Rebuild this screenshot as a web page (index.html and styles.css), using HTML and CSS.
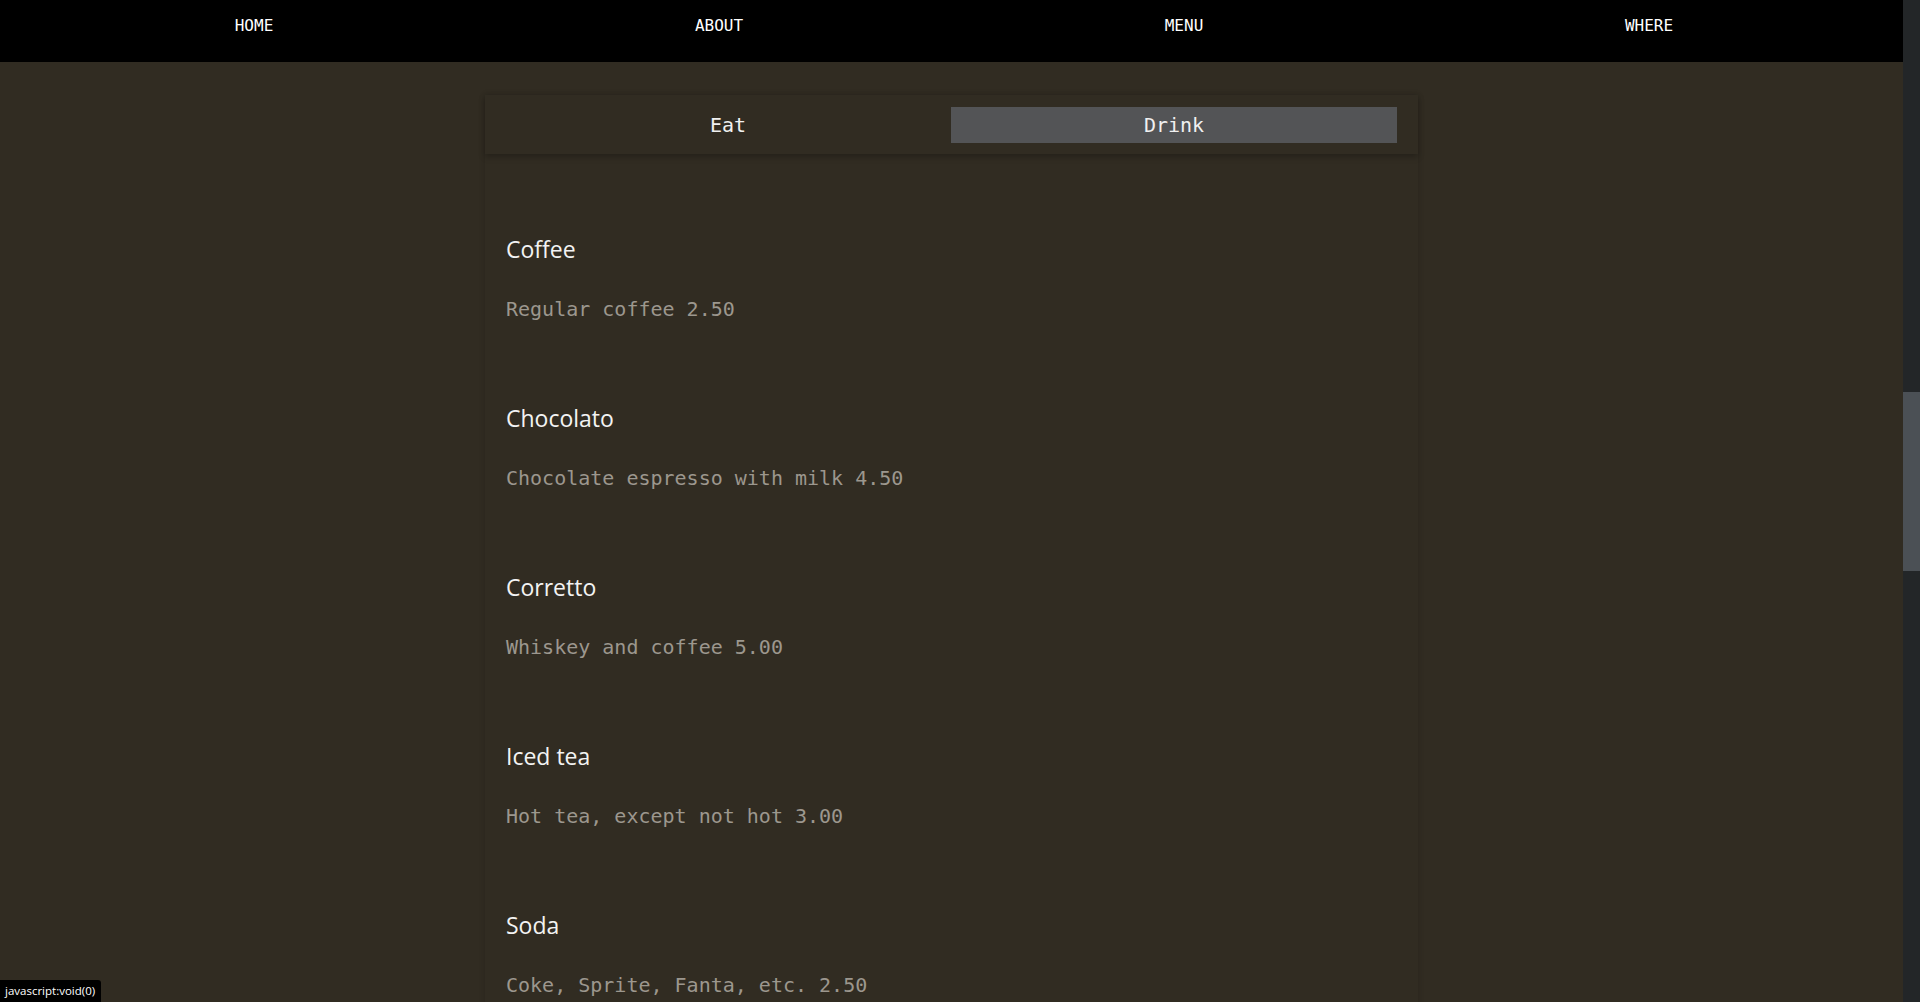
FILE: index.html
```html
<!DOCTYPE html>
<html lang="en">
<head>
<meta charset="utf-8">
<title>Menu</title>
<link rel="stylesheet" href="styles.css">
</head>
<body>
<div class="page">
  <nav class="topnav">
    <a href="#">HOME</a>
    <a href="#">ABOUT</a>
    <a href="#">MENU</a>
    <a href="#">WHERE</a>
  </nav>
  <main class="card">
    <div class="tabs">
      <a class="tab" href="#">Eat</a>
      <a class="tab active" href="#">Drink</a>
    </div>
    <div class="items">
      <section class="item">
        <h3>Coffee</h3>
        <p>Regular coffee 2.50</p>
      </section>
      <section class="item">
        <h3>Chocolato</h3>
        <p>Chocolate espresso with milk 4.50</p>
      </section>
      <section class="item">
        <h3>Corretto</h3>
        <p>Whiskey and coffee 5.00</p>
      </section>
      <section class="item">
        <h3>Iced tea</h3>
        <p>Hot tea, except not hot 3.00</p>
      </section>
      <section class="item">
        <h3>Soda</h3>
        <p>Coke, Sprite, Fanta, etc. 2.50</p>
      </section>
    </div>
  </main>
</div>
<div class="scrollbar"><div class="thumb"></div></div>
<div class="status">javascript:void(0)</div>
</body>
</html>
```
FILE: styles.css
```css
html, body {
  margin: 0;
  height: 100%;
  overflow: hidden;
}
body {
  background: #312c22;
  display: flex;
  font-family: "DejaVu Sans Mono", monospace;
}
.page {
  flex: 1;
  min-width: 0;
  overflow: hidden;
}
.topnav {
  height: 62px;
  background: #000;
  display: grid;
  grid-template-columns: repeat(4, 1fr);
  padding: 0 21.5px;
}
.topnav a {
  color: #fff;
  text-decoration: none;
  text-align: center;
  font-family: "DejaVu Sans Mono", monospace;
  font-size: 16px;
  line-height: 51px;
}
.card {
  width: 933px;
  margin: 33px auto 0;
  box-shadow: 0 0 6px rgba(0, 0, 0, 0.18);
}
.tabs {
  display: grid;
  grid-template-columns: 1fr 1fr;
  padding: 12px 21px 11px 20px;
  box-shadow: 0 3px 6px rgba(0, 0, 0, 0.25);
  position: relative;
}
.tab {
  display: block;
  height: 36px;
  line-height: 36px;
  text-align: center;
  color: #f0f0f0;
  text-decoration: none;
  font-size: 20px;
}
.tab.active {
  background: #535456;
}
.items {
  padding: 40px 21px 0;
}
.item {
  padding: 40px 0 39px;
}
.item h3 {
  margin: 0;
  font-family: "Open Sans", sans-serif;
  font-weight: 400;
  font-size: 23px;
  line-height: 30px;
  color: #f3f3f3;
}
.item p {
  margin: 30px 0 0;
  font-size: 20px;
  line-height: 30px;
  color: #9c978e;
}
.scrollbar {
  width: 17px;
  flex: none;
  background: #232628;
}
.thumb {
  margin-top: 392px;
  height: 179px;
  background: #4b5055;
}
.status {
  position: fixed;
  left: 0;
  bottom: 0;
  height: 22px;
  line-height: 21px;
  padding: 0 6px 0 5px;
  background: #000;
  color: #fff;
  font-family: "Open Sans", sans-serif;
  font-size: 11.5px;
  border-top-right-radius: 3px;
}
```
